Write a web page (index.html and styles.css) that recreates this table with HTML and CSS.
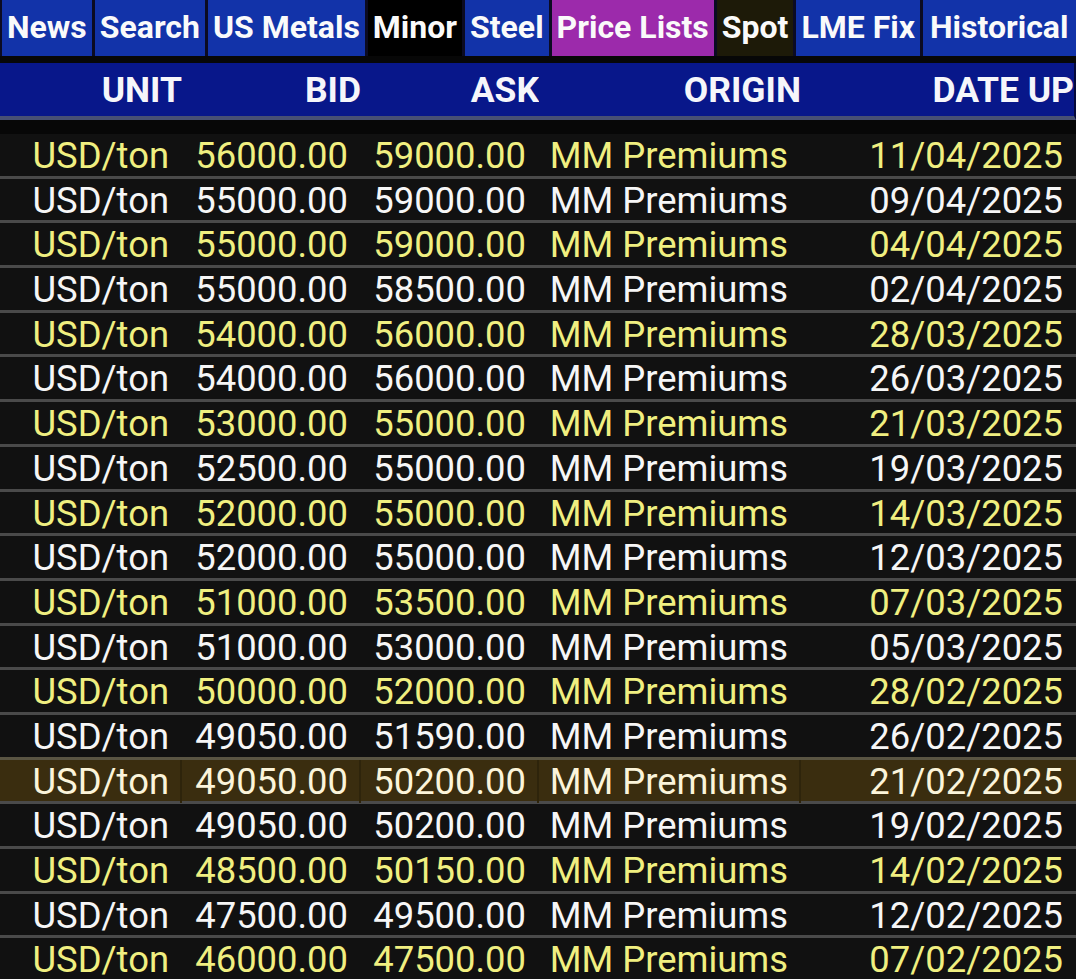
FILE: index.html
```html
<!DOCTYPE html>
<html>
<head>
<meta charset="utf-8">
<link rel="stylesheet" href="styles.css">
</head>
<body>
<div class="app">
  <nav class="tabs">
    <div class="tab blue">News</div>
    <div class="tab blue">Search</div>
    <div class="tab blue">US Metals</div>
    <div class="tab black">Minor</div>
    <div class="tab blue">Steel</div>
    <div class="tab magenta">Price Lists</div>
    <div class="tab olive">Spot</div>
    <div class="tab blue">LME Fix</div>
    <div class="tab blue last">Historical</div>
  </nav>
  <div class="head">
    <div class="hc">UNIT</div>
    <div class="hc">BID</div>
    <div class="hc">ASK</div>
    <div class="hc">ORIGIN</div>
    <div class="hc">DATE UP</div>
  </div>
  <div class="body">
    <div class="row y"><div>USD/ton</div><div>56000.00</div><div>59000.00</div><div>MM Premiums</div><div>11/04/2025</div></div>
    <div class="row w"><div>USD/ton</div><div>55000.00</div><div>59000.00</div><div>MM Premiums</div><div>09/04/2025</div></div>
    <div class="row y"><div>USD/ton</div><div>55000.00</div><div>59000.00</div><div>MM Premiums</div><div>04/04/2025</div></div>
    <div class="row w"><div>USD/ton</div><div>55000.00</div><div>58500.00</div><div>MM Premiums</div><div>02/04/2025</div></div>
    <div class="row y"><div>USD/ton</div><div>54000.00</div><div>56000.00</div><div>MM Premiums</div><div>28/03/2025</div></div>
    <div class="row w"><div>USD/ton</div><div>54000.00</div><div>56000.00</div><div>MM Premiums</div><div>26/03/2025</div></div>
    <div class="row y"><div>USD/ton</div><div>53000.00</div><div>55000.00</div><div>MM Premiums</div><div>21/03/2025</div></div>
    <div class="row w"><div>USD/ton</div><div>52500.00</div><div>55000.00</div><div>MM Premiums</div><div>19/03/2025</div></div>
    <div class="row y"><div>USD/ton</div><div>52000.00</div><div>55000.00</div><div>MM Premiums</div><div>14/03/2025</div></div>
    <div class="row w"><div>USD/ton</div><div>52000.00</div><div>55000.00</div><div>MM Premiums</div><div>12/03/2025</div></div>
    <div class="row y"><div>USD/ton</div><div>51000.00</div><div>53500.00</div><div>MM Premiums</div><div>07/03/2025</div></div>
    <div class="row w"><div>USD/ton</div><div>51000.00</div><div>53000.00</div><div>MM Premiums</div><div>05/03/2025</div></div>
    <div class="row y"><div>USD/ton</div><div>50000.00</div><div>52000.00</div><div>MM Premiums</div><div>28/02/2025</div></div>
    <div class="row w pre"><div>USD/ton</div><div>49050.00</div><div>51590.00</div><div>MM Premiums</div><div>26/02/2025</div></div>
    <div class="row sel"><div>USD/ton</div><div>49050.00</div><div>50200.00</div><div>MM Premiums</div><div>21/02/2025</div></div>
    <div class="row w"><div>USD/ton</div><div>49050.00</div><div>50200.00</div><div>MM Premiums</div><div>19/02/2025</div></div>
    <div class="row y"><div>USD/ton</div><div>48500.00</div><div>50150.00</div><div>MM Premiums</div><div>14/02/2025</div></div>
    <div class="row w"><div>USD/ton</div><div>47500.00</div><div>49500.00</div><div>MM Premiums</div><div>12/02/2025</div></div>
    <div class="row y"><div>USD/ton</div><div>46000.00</div><div>47500.00</div><div>MM Premiums</div><div>07/02/2025</div></div>
  </div>
</div>
</body>
</html>
```

FILE: styles.css
```css
* { box-sizing: border-box; }
html, body {
  margin: 0;
  padding: 0;
  background: #070707;
  overflow: hidden;
}
body {
  font-family: Roboto, "Liberation Sans", sans-serif;
  width: 1076px;
  height: 979px;
}
.app {
  display: flex;
  flex-direction: column;
}
.tabs {
  display: flex;
  height: 56px;
  background: #0b0b22;
  padding-left: 2px;
  gap: 3px;
}
.tab {
  display: flex;
  align-items: center;
  padding: 0 5px 3px;
  font-size: 32px;
  font-weight: 700;
  color: #fafafa;
  white-space: nowrap;
}
.tab.last { flex: 1; padding-left: 7px; }
.blue { background: #1233a9; }
.black { background: #000; }
.magenta { background: #9c2aab; }
.olive { background: #1d1a08; }
.head {
  margin-top: 7px;
  height: 57px;
  background: #08178a;
  border-bottom: 4px solid #485074;
  border-right: 2px solid #05093a;
  display: grid;
  grid-template-columns: 182px 179px 178px 262px 1fr;
  align-items: center;
  overflow: hidden;
}
.hc {
  text-align: right;
  font-size: 35.5px;
  font-weight: 700;
  color: #f6f6fa;
  white-space: nowrap;
  overflow: hidden;
}
.body {
  padding-top: 14px;
}
.row {
  display: grid;
  grid-template-columns: 182px 179px 178px 262px 1fr;
  height: 44.7px;
  align-items: center;
  background: #111111;
  border-bottom: 3px solid #4a4a4a;
  font-size: 36.4px;
}
.row > div {
  padding-right: 13px;
  white-space: nowrap;
  height: 100%;
  display: flex;
  align-items: center;
  justify-content: flex-end;
}
.row.y { color: #f0ef80; }
.row.w { color: #f6f6f6; }
.row.pre { border-bottom-color: #5a5543; }
.row.sel {
  background: #3a2d0f;
  color: #fbf4da;
}
.row.sel > div { box-shadow: inset -2px 0 0 #2e240b; }
.row.sel > div:last-child { box-shadow: none; }
```
